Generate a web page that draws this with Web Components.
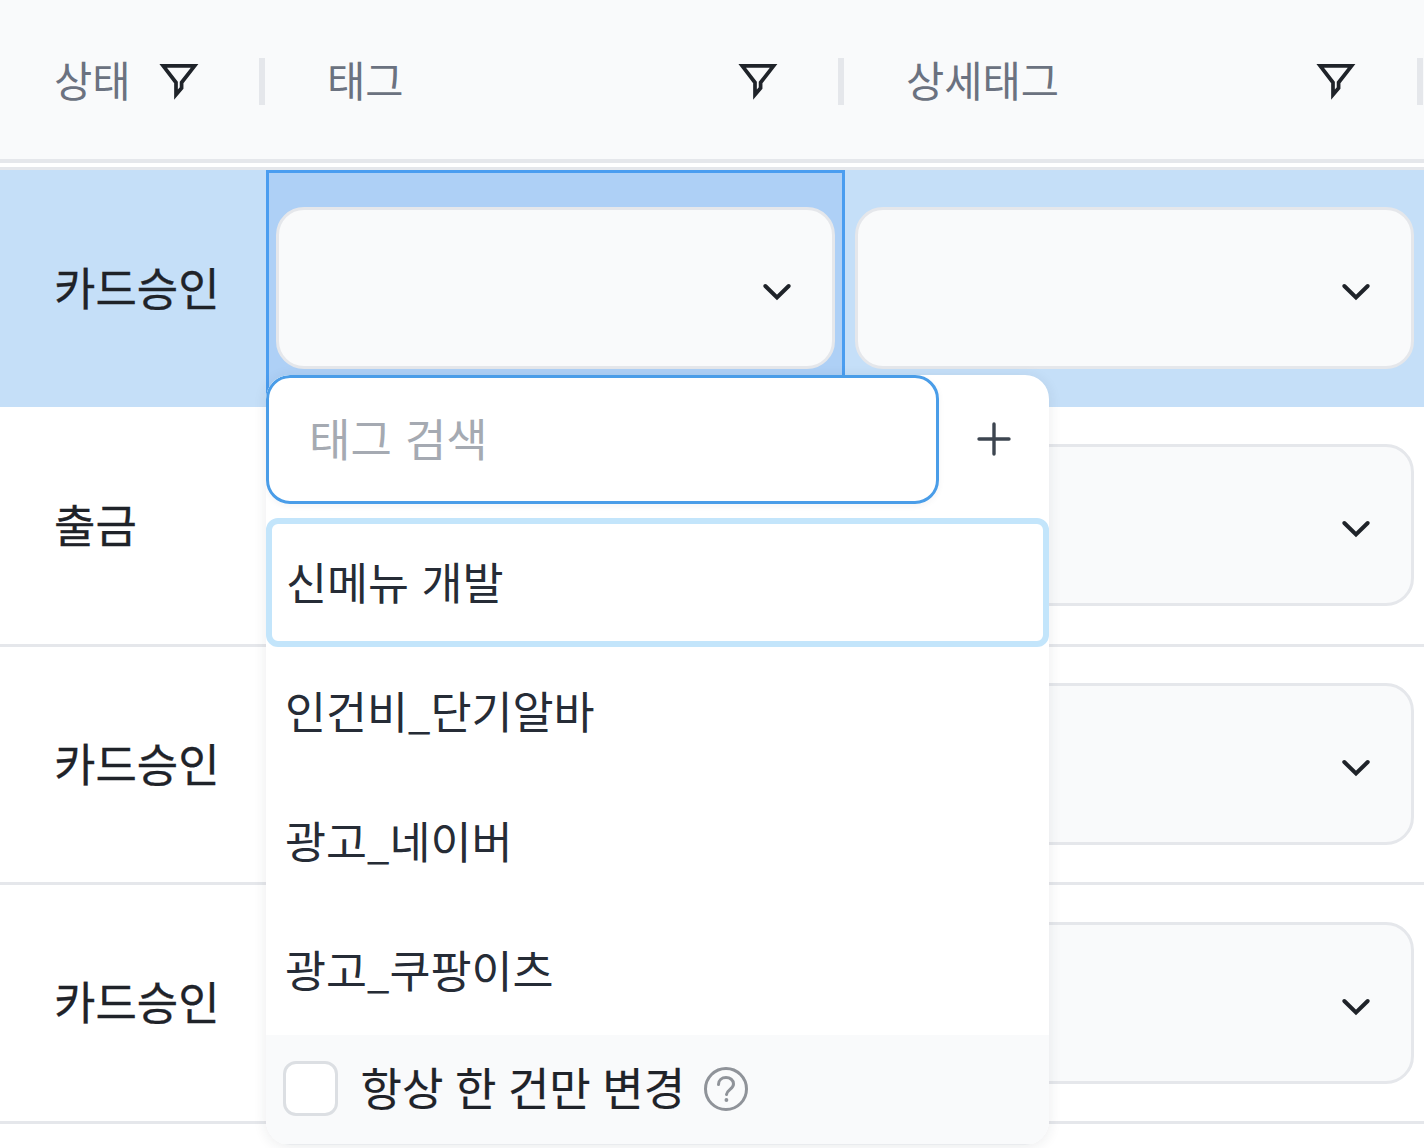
<!DOCTYPE html>
<html lang="ko"><head><meta charset="utf-8"><title>거래 내역</title>
<style>
html,body{margin:0;padding:0;background:#fff;height:1148px;overflow:hidden}
body{font-family:"Noto Sans CJK KR","Noto Sans",sans-serif;color:#1f2329}
.us{font-size:40px}
</style></head><body>
<ledger-table>
  <ledger-head>
    <head-cell wide="266" first>상태</head-cell>
    <head-cell wide="579">태그</head-cell>
    <head-cell wide="579" last>상세태그</head-cell>
  </ledger-head>
  <ledger-row h="237" label="카드승인" selected></ledger-row>
  <ledger-row h="240" label="출금" border></ledger-row>
  <ledger-row h="238" label="카드승인" border></ledger-row>
  <ledger-row h="239" label="카드승인" border></ledger-row>
  <tag-dropdown>
    <tag-option focused>신메뉴 개발</tag-option>
    <tag-option>인건비<span class="us">_</span>단기알바</tag-option>
    <tag-option>광고<span class="us">_</span>네이버</tag-option>
    <tag-option>광고<span class="us">_</span>쿠팡이츠</tag-option>
  </tag-dropdown>
</ledger-table>
<script>
const def=(name,css,html,init)=>{
  customElements.define(name,class extends HTMLElement{
    constructor(){super();this.attachShadow({mode:'open'});}
    connectedCallback(){
      this.shadowRoot.innerHTML='<style>'+css+'</style>'+(typeof html==='function'?html(this):html);
      init&&init(this);
    }
  });
};
def('filter-icon',':host{display:block;width:42px;height:42px;flex:none}svg{display:block}',
 `<svg width="42" height="42" viewBox="0 0 42 42" fill="none" stroke="#1f2329" stroke-width="3.7" stroke-linejoin="miter" stroke-miterlimit="10"><path d="M5.2 4.9H36.6L23.6 21.5V27L18 33.6V21.5Z"/></svg>`);
def('chevron-icon',':host{display:block;width:30px;height:18px;flex:none}svg{display:block}',
 `<svg width="30" height="18" viewBox="0 0 30 18" fill="none" stroke="#1f2329" stroke-width="4" stroke-linecap="round" stroke-linejoin="miter"><path d="M3.3 3L15 14.5L26.7 3"/></svg>`);
def('plus-icon',':host{display:block;width:34px;height:34px;flex:none}svg{display:block}',
 `<svg width="34" height="34" viewBox="0 0 34 34" fill="none" stroke="#3d4550" stroke-width="3.4" stroke-linecap="round"><path d="M17 2V32M2 17H32"/></svg>`);
def('help-icon',':host{display:block;width:46px;height:46px;flex:none}svg{display:block}',
 `<svg width="46" height="46" viewBox="0 0 46 46" fill="none" stroke="#8f9399" stroke-width="3"><circle cx="23" cy="23" r="20.5"/><path d="M15.5 18.5C15.5 14 19 11.5 23 11.5C27 11.5 30.5 14 30.5 18C30.5 23 24 23.5 23.5 28.5" stroke-linecap="round"/><circle cx="23.4" cy="34" r="1.9" fill="#8f9399" stroke="none"/></svg>`);
def('tag-select',`:host{display:flex;box-sizing:border-box;height:162px;flex:1;align-items:center;justify-content:flex-end;padding-right:40px;
  background:#f9fafb;border:3px solid #e5e7eb;border-radius:28px;position:relative;top:-.5px}
  chevron-icon{margin-top:8px}`,'<chevron-icon></chevron-icon>');
def('head-cell',`:host{display:flex;box-sizing:border-box;align-items:center;height:159px;position:relative;flex:none;font-size:41.6px;color:#6b7280;padding:0 66px 0 61px}
  :host([first]){padding-left:54px}
  :host([last]){padding-right:67px}
  .t{flex:1;line-height:48px;white-space:nowrap;position:relative;top:-1px}
  filter-icon{margin-top:5px}
  .d{position:absolute;right:1px;top:58px;width:6px;height:47px;background:#e5e7eb}`,
  `<span class="t"><slot></slot></span><filter-icon></filter-icon><span class="d"></span>`,
  el=>{el.style.width=el.getAttribute('wide')+'px'});
def('ledger-head',`:host{display:block;border-bottom:3px solid #e5e7eb;padding-bottom:4px}
  .bar{display:flex;box-sizing:border-box;height:163px;background:#f9fafb;border-bottom:4px solid #e5e7eb}`,'<div class="bar"><slot></slot></div>');
def('ledger-row',`:host{display:grid;grid-template-columns:266px 579px 579px;box-sizing:border-box;background:#fff}
  :host([border]){border-bottom:3px solid #e5e7eb}
  :host([selected]){background:#c5dff8;border-top:0}
  .label{display:flex;align-items:center;padding-left:54px;font-size:45px;line-height:56px;color:#1f2329;white-space:nowrap;-webkit-text-stroke:.3px #1f2329}
  .label span{position:relative;top:-2px}
  .cell{display:flex;align-items:center;padding:0 10px;box-sizing:border-box;min-width:0}
  .cell.detail{padding-right:10.5px}
  .cell.active{background:#aed0f6;box-shadow:inset 0 0 0 3px #4a9df0}`,
  el=>`<div class="label"><span>${el.getAttribute('label')}</span></div>
    <div class="cell ${el.hasAttribute('selected')?'active':''}"><tag-select></tag-select></div>
    <div class="cell detail"><tag-select></tag-select></div>`,
  el=>{el.style.height=el.getAttribute('h')+'px'});
def('ledger-table',`:host{display:block;position:relative;width:1424px;height:1148px;overflow:hidden}`,`<slot></slot>`);
def('tag-option',`:host{display:flex;box-sizing:border-box;height:129.25px;align-items:center;padding-left:19px;font-size:44.6px;color:#262c36;border-radius:12px;white-space:nowrap}
  :host([focused]){border:6px solid #c3e5fb;padding-left:14px}
  span{position:relative;top:-2px}`,'<span><slot></slot></span>');
def('tag-dropdown',`:host{display:flex;flex-direction:column;position:absolute;left:266px;top:375px;width:783px;height:770px;box-sizing:border-box;background:#fff;border-radius:24px;box-shadow:0 2px 14px rgba(31,41,55,.09);overflow:hidden}
  .top{display:flex;align-items:center;height:128.5px;flex:none}
  .input{box-sizing:border-box;width:673px;height:128.5px;flex:none;border:3px solid #4a9de8;border-radius:24px;display:flex;align-items:center;padding-left:40px;font-size:45px;color:#a5aab2;word-spacing:.5px;white-space:nowrap;box-shadow:0 2px 6px rgba(31,41,55,.05)}
  .input span{position:relative;top:-2px}
  .plus{flex:1;display:flex;justify-content:center;align-items:center}
  .list{margin-top:14.5px;flex:none}
  .foot{flex:1;display:flex;align-items:center;background:#f9fafb;border-bottom:1px solid #e9ebee;padding-left:16.5px;font-size:45px;color:#1f2329;word-spacing:-1px;white-space:nowrap}
  .box{box-sizing:border-box;width:55px;height:55px;flex:none;background:#fff;border:3px solid #dcdfe3;border-radius:13px;margin-right:23px;margin-top:-2px}
  .lbl{position:relative;top:-3px;-webkit-text-stroke:.2px #1f2329}
  help-icon{margin-left:17.5px;margin-top:-2px}`,
  `<div class="top"><div class="input"><span>태그 검색</span></div><div class="plus"><plus-icon></plus-icon></div></div>
   <div class="list"><slot></slot></div>
   <div class="foot"><span class="box"></span><span class="lbl">항상 한 건만 변경</span><help-icon></help-icon></div>`);
</script>
</body></html>
